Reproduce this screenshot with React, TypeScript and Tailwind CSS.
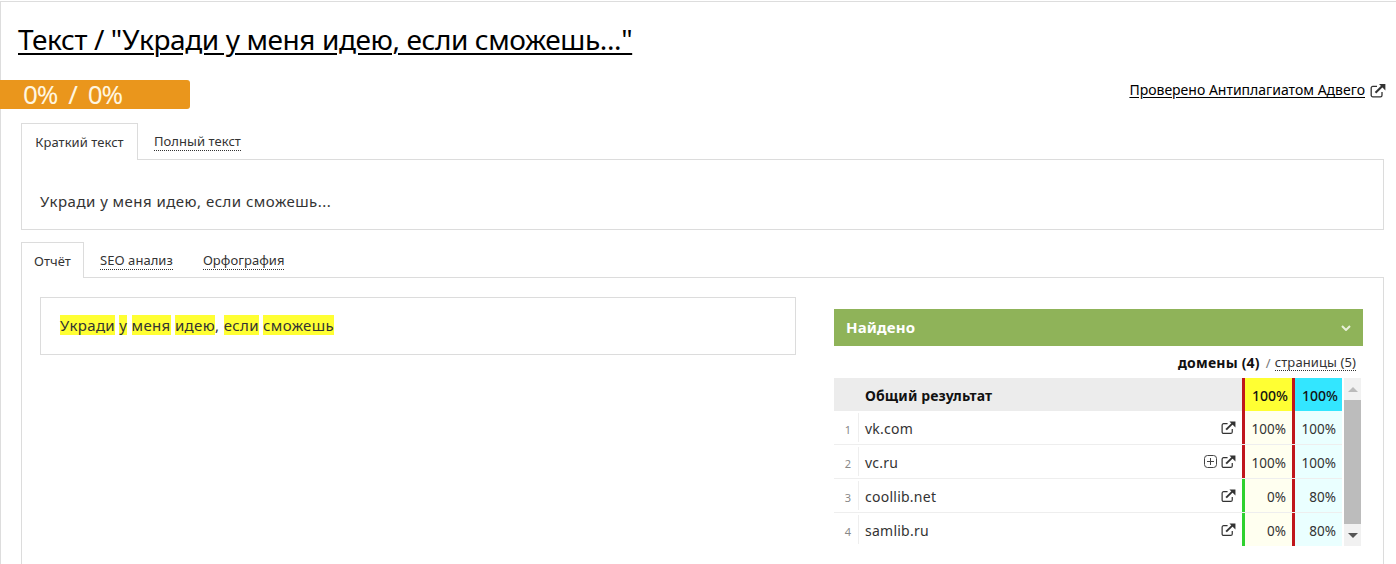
import type { ReactNode } from "react";

const FONT = "font-['Noto_Sans','Liberation_Sans',sans-serif]";

function ExternalIcon({ className }: { className?: string }) {
  return (
    <svg viewBox="0 0 16 15" className={className} fill="none">
      <path d="M12 9v3.2a1.6 1.6 0 0 1-1.6 1.6H2.8a1.6 1.6 0 0 1-1.6-1.6V5a1.6 1.6 0 0 1 1.6-1.6H7" stroke="#333" strokeWidth="1.3" />
      <path d="M5.5 9.8 12.6 2.8" stroke="#333" strokeWidth="2.1" />
      <path d="M9 1h6.4v6.4z" fill="#333" />
    </svg>
  );
}

function PlusBox() {
  return (
    <svg viewBox="0 0 13 13" className="h-[13px] w-[13px]" fill="none" stroke="#444" strokeWidth="1">
      <rect x="0.5" y="0.5" width="12" height="12" rx="3" />
      <path d="M6.5 3v7M3 6.5h7" />
    </svg>
  );
}

function Tab({ active, children, className }: { active?: boolean; children: ReactNode; className: string }) {
  if (active) {
    return (
      <div className={`relative z-10 -mb-px flex items-center justify-center border border-b-0 border-[#dcdcdc] bg-white pt-[2px] text-[13px] tracking-[0.05px] text-[#333] ${className}`}>
        <span>{children}</span>
      </div>
    );
  }
  return (
    <div className={`flex items-center pt-[2px] text-[13px] tracking-[0.05px] text-[#333] ${className}`}>
      <span className="border-b border-dotted border-[#333] leading-[17px]">{children}</span>
    </div>
  );
}

const rows = [
  { n: 1, name: "vk.com", a: "100%", b: "100%", aHit: true, plus: false },
  { n: 2, name: "vc.ru", a: "100%", b: "100%", aHit: true, plus: true },
  { n: 3, name: "coollib.net", a: "0%", b: "80%", aHit: false, plus: false },
  { n: 4, name: "samlib.ru", a: "0%", b: "80%", aHit: false, plus: false },
];

function Results() {
  return (
    <div className="mt-[12px] w-[529px] shrink-0">
      <div className="flex h-[37px] items-center justify-between bg-[#8fb359] pl-[12px] pr-[12px] text-[15px] font-bold text-white">
        <span className="tracking-[0.15px]">Найдено</span>
        <svg viewBox="0 0 10 6" className="h-[6px] w-[10px]" fill="none" stroke="#e8f0da" strokeWidth="2">
          <path d="M1 1l4 4 4-4" />
        </svg>
      </div>
      <div className="mt-[8px] flex h-[18px] items-center justify-end pr-[7px] text-[13px] leading-[18px] tracking-[0.1px] text-[#333]">
        <b className="text-[14px] tracking-[0.2px] text-[#111]">домены (4)</b>
        <span className="ml-[6px] mr-[4px] text-[#777]">/</span>
        <span className="border-b border-dotted border-[#333] leading-[15px]">страницы (5)</span>
      </div>
      <div className="mt-[6px] flex w-[527px]">
        <div className="w-[508px]">
          <div className="flex h-[33px] bg-[#ececec] text-[14px]">
            <div className="w-[31px]" />
            <div className="flex-1 self-center pt-[1px] font-bold tracking-[0.12px] text-[#111]">Общий результат</div>
            <div className="flex w-[50px] items-center justify-end border-l-[3px] border-[#c0161b] bg-[#ffff33] pr-[4px] pt-[2px] font-medium text-[#111]">100%</div>
            <div className="flex w-[50px] items-center justify-end border-l-[3px] border-[#c0161b] bg-[#33e6ff] pr-[4px] pt-[2px] font-medium text-[#111]">100%</div>
          </div>
          {rows.map((row) => (
            <div key={row.n} className="flex h-[34px] border-b border-[#eeeeee] text-[14px] text-[#333] last:h-[33px] last:border-b-0">
              <div className="flex w-[24px] items-center justify-end pr-[7px] pt-[5px] text-[11px] text-[#888]">{row.n}</div>
              <div className="my-[2px] flex flex-1 items-center border-l border-[#eeeeee] pl-[6px]">
                <span className="pt-[1px] tracking-[0.25px]">{row.name}</span>
                <span className="ml-auto mr-[6px] flex items-center gap-[4px]">
                  {row.plus ? <PlusBox /> : null}
                  <ExternalIcon className="-mt-[1px] h-[15px] w-[15px]" />
                </span>
              </div>
              <div className={`flex w-[50px] items-center justify-end border-l-[3px] bg-[#fffff0] pr-[6px] pt-[3px] text-[13.5px] ${row.aHit ? "border-[#c0161b]" : "border-[#2fd12f]"}`}>{row.a}</div>
              <div className="flex w-[50px] items-center justify-end border-l-[3px] border-[#c0161b] bg-[#eaffff] pr-[6px] pt-[3px] text-[13.5px]">{row.b}</div>
            </div>
          ))}
        </div>
        <div className="ml-[2px] flex w-[17px] flex-col bg-[#f1f1f1]">
          <div className="flex h-[22px] items-center justify-center">
            <div className="h-0 w-0 border-x-[5px] border-b-[5px] border-x-transparent border-b-[#bbbbbb]" />
          </div>
          <div className="h-[124px] bg-[#bcbcbc]" />
          <div className="flex flex-1 items-center justify-center">
            <div className="h-0 w-0 border-x-[5px] border-t-[5px] border-x-transparent border-t-[#555555]" />
          </div>
        </div>
      </div>
    </div>
  );
}

export default function App() {
  return (
    <div className={`h-[564px] w-[1396px] overflow-hidden bg-white ${FONT}`}>
      <div className="mt-[1px] h-screen border-l border-t border-[#dddddd]">
        <h1 className="mt-[19px] pl-[17px] text-[28px] leading-[36px] tracking-[-0.4px] text-black underline decoration-[2px] underline-offset-[3px]">
          Текст / "Укради у меня идею, если сможешь..."
        </h1>
        <div className="mt-[23px] flex items-start justify-between pr-[10px]">
          <div className="-ml-px flex h-[29px] w-[190px] items-center rounded-r-[3px] bg-[#ea961c] pl-[23px] text-[26px] leading-[29px] tracking-[-1px] text-[#fff6e0] [word-spacing:5px]">
            0% / 0%
          </div>
          <div className="flex items-center gap-[5px] pt-[1px] text-[14px] leading-[18px] text-black">
            <span className="underline underline-offset-[2px]">Проверено Антиплагиатом Адвего</span>
            <ExternalIcon className="h-[15px] w-[16px]" />
          </div>
        </div>

        <div className="ml-[20px] mr-[12px] mt-[14px]">
          <div className="flex">
            <Tab active className="h-[37px] w-[117px]">Краткий текст</Tab>
            <Tab className="ml-[16px] h-[36px]">Полный текст</Tab>
          </div>
          <div className="flex h-[71px] items-center border border-[#dcdcdc] pl-[18px] pt-[14px] text-[15px] tracking-[0.47px] text-[#333]">
            Укради у меня идею, если сможешь...
          </div>
        </div>

        <div className="ml-[20px] mr-[12px] mt-[12px]">
          <div className="flex">
            <Tab active className="h-[36px] w-[63px]">Отчёт</Tab>
            <Tab className="ml-[16px] h-[35px]">SEO анализ</Tab>
            <Tab className="ml-[30px] h-[35px]">Орфография</Tab>
          </div>
          <div className="flex h-[300px] items-start border border-[#dcdcdc] pl-[18px] pt-[19px]">
            <div className="flex h-[58px] w-[756px] items-center border border-[#dcdcdc] pb-[2px] pl-[19px] text-[15px] tracking-[0.35px] text-[#333]">
              <span>
                <mark className="bg-[#ffff33] text-[#333]">Укради</mark> <mark className="bg-[#ffff33] text-[#333]">у</mark>{" "}
                <mark className="bg-[#ffff33] text-[#333]">меня</mark> <mark className="bg-[#ffff33] text-[#333]">идею</mark>,{" "}
                <mark className="bg-[#ffff33] text-[#333]">если</mark> <mark className="bg-[#ffff33] text-[#333]">сможешь</mark>
              </span>
            </div>
            <div className="ml-[38px]">
              <Results />
            </div>
          </div>
        </div>
      </div>
    </div>
  );
}
